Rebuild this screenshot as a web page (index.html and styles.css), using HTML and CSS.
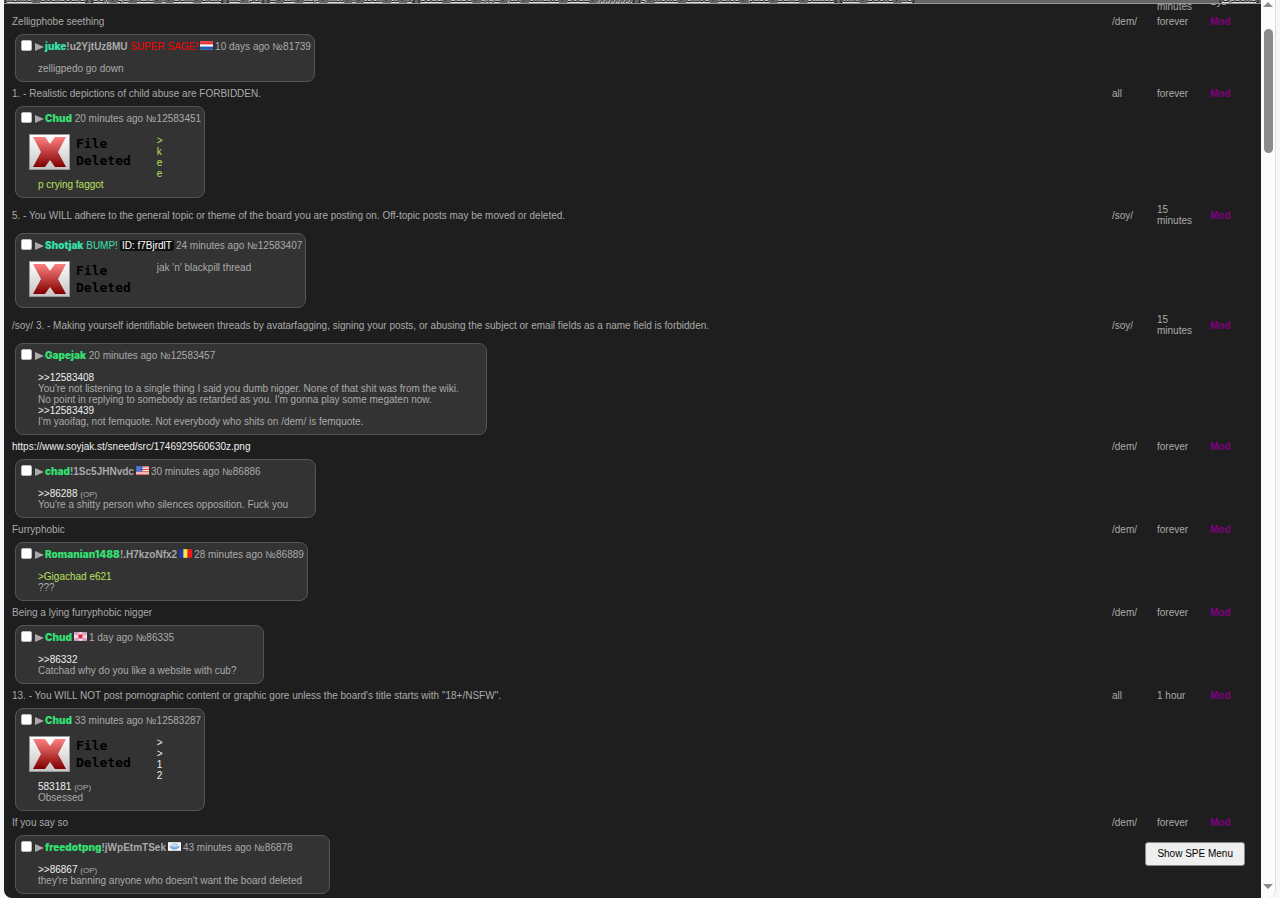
FILE: index.html
```html
<!DOCTYPE html>
<html lang="en">
<head>
    <meta charset="UTF-8">
    <meta name="viewport" content="width=device-width, initial-scale=1.0">
    <title>Ban list</title>
    <link rel="stylesheet" href="styles.css">
</head>
<body>
    <svg class="defs" aria-hidden="true">
        <defs>
            <linearGradient id="paper" x1="0" y1="0" x2="0" y2="1">
                <stop offset="0" stop-color="#ffffff"/>
                <stop offset="1" stop-color="#c4c4c4"/>
            </linearGradient>
            <linearGradient id="cross" x1="0" y1="0" x2="0" y2="1">
                <stop offset="0" stop-color="#ff8080"/>
                <stop offset="1" stop-color="#800000"/>
            </linearGradient>
            <symbol id="deleted" viewBox="0 0 41 36">
                <rect x="0.5" y="0.5" width="40" height="35" fill="url(#paper)" stroke="#999"/>
                <path d="M4 3H16L21 10L26 3H37L29 18L37 33H26L21 26L16 33H4L12 18Z" fill="url(#cross)"/>
            </symbol>
        </defs>
    </svg>

    <main class="page">
        <nav class="boardlist">
            <span>[<a href="#">home</a> / <a href="#">overboard</a>] [<a href="#">soy</a> / <a href="#">qa</a> / <a href="#">raid</a> / <a href="#">r</a> / <a href="#">dem</a> / <a href="#">craft</a>] [<a href="#">int</a> / <a href="#">pol</a>] [<a href="#">a</a> / <a href="#">an</a> / <a href="#">asp</a> / <a href="#">mtv</a> / <a href="#">r</a> / <a href="#">tech</a> / <a href="#">tv</a> / <a href="#">x</a>] [<a href="#">soda</a> / <a href="#">base</a> / <a href="#">giga</a> / <a href="#">jak</a> / <a href="#">omake</a> / <a href="#">soda</a> / <a href="#">yyyyyyy</a>] [<a href="#">q</a> / <a href="#">news</a> / <a href="#">chive</a> / <a href="#">rules</a> / <a href="#">pass</a> / <a href="#">bans</a> / <a href="#">status</a>] [<a href="#">wiki</a> / <a href="#">booru</a> / <a href="#">irc</a>]</span>
            <span>[<a href="#">Options</a>]</span>
        </nav>

        <table class="bans">
            <colgroup>
                <col>
                <col class="col-board">
                <col class="col-length">
                <col class="col-staff">
            </colgroup>
            <tbody>
                <tr>
                    <td></td>
                    <td></td>
                    <td class="length">15 minutes</td>
                    <td>Sys</td>
                </tr>

                <tr>
                    <td>Zelligphobe seething</td>
                    <td>/dem/</td>
                    <td class="length">forever</td>
                    <td class="mod">Mod</td>
                </tr>
                <tr>
                    <td colspan="4">
                        <div class="post">
                            <div class="intro">
                                <input type="checkbox" aria-label="Select post 81739"><span class="arrow"></span>
                                <span><b class="name email">juke</b><b class="trip">!u2YjtUz8MU</b> <span class="sage">SUPER SAGE!</span></span>
                                <svg class="flag" viewBox="0 0 12 8"><rect width="12" height="8" fill="#fff"/><rect width="12" height="3" fill="#e8383c"/><rect y="5" width="12" height="3" fill="#2458a8"/></svg>
                                <span>10 days ago №81739</span>
                            </div>
                            <div class="body">zelligpedo go down</div>
                        </div>
                    </td>
                </tr>

                <tr>
                    <td>1. - Realistic depictions of child abuse are FORBIDDEN.</td>
                    <td>all</td>
                    <td class="length">forever</td>
                    <td class="mod">Mod</td>
                </tr>
                <tr>
                    <td colspan="4">
                        <div class="post">
                            <div class="intro">
                                <input type="checkbox" aria-label="Select post 12583451"><span class="arrow"></span>
                                <span><b class="name">Chud</b> 20 minutes ago №12583451</span>
                            </div>
                            <div class="file"><svg class="file-icon"><use href="#deleted"/></svg><span>File<br>Deleted</span></div>
                            <div class="body"><span class="quote">&gt;keep crying faggot</span></div>
                        </div>
                    </td>
                </tr>

                <tr>
                    <td>5. - You WILL adhere to the general topic or theme of the board you are posting on. Off-topic posts may be moved or deleted.</td>
                    <td>/soy/</td>
                    <td class="length">15 minutes</td>
                    <td class="mod">Mod</td>
                </tr>
                <tr>
                    <td colspan="4">
                        <div class="post">
                            <div class="intro">
                                <input type="checkbox" aria-label="Select post 12583407"><span class="arrow"></span>
                                <span><b class="name email">Shotjak</b> <span class="bump">BUMP!</span></span>
                                <span class="poster-id">ID: f7BjrdlT</span>
                                <span>24 minutes ago №12583407</span>
                            </div>
                            <div class="file"><svg class="file-icon"><use href="#deleted"/></svg><span>File<br>Deleted</span></div>
                            <div class="body">jak 'n' blackpill thread</div>
                        </div>
                    </td>
                </tr>

                <tr>
                    <td>/soy/ 3. - Making yourself identifiable between threads by avatarfagging, signing your posts, or abusing the subject or email fields as a name field is forbidden.</td>
                    <td>/soy/</td>
                    <td class="length">15 minutes</td>
                    <td class="mod">Mod</td>
                </tr>
                <tr>
                    <td colspan="4">
                        <div class="post">
                            <div class="intro">
                                <input type="checkbox" aria-label="Select post 12583457"><span class="arrow"></span>
                                <span><b class="name">Gapejak</b> 20 minutes ago №12583457</span>
                            </div>
                            <div class="body"><a href="#">&gt;&gt;12583408</a><br>You're not listening to a single thing I said you dumb nigger. None of that shit was from the wiki.<br>No point in replying to somebody as retarded as you. I'm gonna play some megaten now.<br><a href="#">&gt;&gt;12583439</a><br>I'm yaoifag, not femquote. Not everybody who shits on /dem/ is femquote.</div>
                        </div>
                    </td>
                </tr>

                <tr>
                    <td><a href="#">https://www.soyjak.st/sneed/src/1746929560630z.png</a></td>
                    <td>/dem/</td>
                    <td class="length">forever</td>
                    <td class="mod">Mod</td>
                </tr>
                <tr>
                    <td colspan="4">
                        <div class="post">
                            <div class="intro">
                                <input type="checkbox" aria-label="Select post 86886"><span class="arrow"></span>
                                <span><b class="name">chad</b><b class="trip">!1Sc5JHNvdc</b></span>
                                <svg class="flag" viewBox="0 0 12 8"><rect width="12" height="8" fill="#f4d8d8"/><path d="M0 0.5H12M0 3H12M0 5.2H12M0 7.5H12" stroke="#e85050"/><rect width="6" height="5" fill="#3868c8"/><path d="M1 1.5H5M1 3.5H5" stroke="#a8c0f0" stroke-width="0.7" stroke-dasharray="1 1"/></svg>
                                <span>30 minutes ago №86886</span>
                            </div>
                            <div class="body"><a href="#">&gt;&gt;86288</a> <small>(OP)</small><br>You're a shitty person who silences opposition. Fuck you</div>
                        </div>
                    </td>
                </tr>

                <tr>
                    <td>Furryphobic</td>
                    <td>/dem/</td>
                    <td class="length">forever</td>
                    <td class="mod">Mod</td>
                </tr>
                <tr>
                    <td colspan="4">
                        <div class="post">
                            <div class="intro">
                                <input type="checkbox" aria-label="Select post 86889"><span class="arrow"></span>
                                <span><b class="name">Romanian1488</b><b class="trip">!.H7kzoNfx2</b></span>
                                <svg class="flag" viewBox="0 0 12 8"><rect width="4" height="8" fill="#1838c0"/><rect x="4" width="4" height="8" fill="#fce83c"/><rect x="8" width="4" height="8" fill="#f01818"/></svg>
                                <span>28 minutes ago №86889</span>
                            </div>
                            <div class="body"><span class="quote">&gt;Gigachad e621</span><br>???</div>
                        </div>
                    </td>
                </tr>

                <tr>
                    <td>Being a lying furryphobic nigger</td>
                    <td>/dem/</td>
                    <td class="length">forever</td>
                    <td class="mod">Mod</td>
                </tr>
                <tr>
                    <td colspan="4">
                        <div class="post">
                            <div class="intro">
                                <input type="checkbox" aria-label="Select post 86335"><span class="arrow"></span>
                                <b class="name">Chud</b>
                                <svg class="flag" viewBox="0 0 12 8"><rect width="12" height="8" fill="#f2b4c8"/><path d="M0 0L12 8M12 0L0 8" stroke="#a890d8"/><path d="M6 0V8M0 4H12" stroke="#fbe4ea" stroke-width="2"/><circle cx="6" cy="4" r="2" fill="#e02838"/></svg>
                                <span>1 day ago №86335</span>
                            </div>
                            <div class="body"><a href="#">&gt;&gt;86332</a><br>Catchad why do you like a website with cub?</div>
                        </div>
                    </td>
                </tr>

                <tr>
                    <td>13. - You WILL NOT post pornographic content or graphic gore unless the board's title starts with "18+/NSFW".</td>
                    <td>all</td>
                    <td class="length">1 hour</td>
                    <td class="mod">Mod</td>
                </tr>
                <tr>
                    <td colspan="4">
                        <div class="post">
                            <div class="intro">
                                <input type="checkbox" aria-label="Select post 12583287"><span class="arrow"></span>
                                <span><b class="name">Chud</b> 33 minutes ago №12583287</span>
                            </div>
                            <div class="file"><svg class="file-icon"><use href="#deleted"/></svg><span>File<br>Deleted</span></div>
                            <div class="body"><a href="#">&gt;&gt;12583181</a> <small>(OP)</small><br>Obsessed</div>
                        </div>
                    </td>
                </tr>

                <tr>
                    <td>If you say so</td>
                    <td>/dem/</td>
                    <td class="length">forever</td>
                    <td class="mod">Mod</td>
                </tr>
                <tr>
                    <td colspan="4">
                        <div class="post">
                            <div class="intro">
                                <input type="checkbox" aria-label="Select post 86878"><span class="arrow"></span>
                                <span><b class="name">freedotpng</b><b class="trip">!jWpEtmTSek</b></span>
                                <svg class="flag" viewBox="0 0 12 8"><rect width="12" height="8" fill="#f4f8fc"/><path d="M1 3Q2 6.5 6 7Q10 6.5 11 3L8 4.5H4Z" fill="#78a8d8"/><ellipse cx="6" cy="3" rx="3" ry="1.6" fill="#c4dcf0" stroke="#88b0dc" stroke-width="0.6"/></svg>
                                <span>43 minutes ago №86878</span>
                            </div>
                            <div class="body"><a href="#">&gt;&gt;86867</a> <small>(OP)</small><br>they're banning anyone who doesn't want the board deleted</div>
                        </div>
                    </td>
                </tr>
            </tbody>
        </table>

        <button type="button" class="spe-menu">Show SPE Menu</button>
    </main>

    <div class="scrollbar">
        <span class="scroll-up"></span>
        <span class="thumb"></span>
        <span class="scroll-down"></span>
    </div>
</body>
</html>
```
FILE: styles.css
```css
* {
    box-sizing: border-box;
}
body {
    display: flex;
    height: 100vh;
    margin: 0;
    padding: 0 4px;
    overflow: hidden;
    background: #f6f7f9;
    color: #aaa;
    font-family: "Liberation Sans", Arial, sans-serif;
    font-size: 10px;
    line-height: 11px;
}
a {
    color: #eee;
    text-decoration: none;
}
.defs {
    position: absolute;
    width: 0;
    height: 0;
}

/* window */
.page {
    position: relative;
    flex: 1;
    overflow: hidden;
    padding: 0 4px 0 5px;
    background: #1e1e1e;
    border-bottom-left-radius: 8px;
}
.boardlist {
    position: absolute;
    top: 0;
    left: 0;
    right: 0;
    display: flex;
    justify-content: space-between;
    align-items: flex-end;
    height: 4px;
    padding: 0 2px 0 0;
    overflow: hidden;
    background: #666;
    border-bottom: 1px solid #999;
    color: #111;
    white-space: nowrap;
}
.boardlist a {
    color: #ddd;
    text-decoration: underline;
    text-shadow: 0 1px #000;
}

/* ban table */
.bans {
    width: 100%;
    margin-top: -13px;
    border-spacing: 2px;
    table-layout: fixed;
}
.bans td {
    padding: 1px;
}
.bans .length {
    padding-right: 10px;
}
.col-board {
    width: 43px;
}
.col-length {
    width: 51px;
}
.col-staff {
    width: 46px;
}
.mod {
    color: #800080;
    font-weight: bold;
}

/* posts */
.post {
    display: flow-root;
    width: fit-content;
    margin: 3px 3px 2px;
    padding: 3px;
    background: #333;
    border: 1px solid #555;
    border-radius: 8px;
}
.intro {
    display: flex;
    align-items: center;
    gap: 2px;
    height: 17px;
    padding-left: 2px;
    white-space: nowrap;
}
.intro input {
    appearance: none;
    width: 11px;
    height: 11px;
    margin: 0 1px 3px 0;
    background: #fff;
    border: 1px solid #bbb;
    border-radius: 2px;
}
.intro input:checked {
    background: #0075ff;
}
.arrow {
    border: 4px solid transparent;
    border-left: 9px solid #aaa;
    border-right: 0;
    margin-right: -1px;
}
.name {
    color: #34e073;
    font-family: Inter, "Liberation Sans", sans-serif;
    font-weight: 900;
}
.email,
.bump {
    color: #34e0a8;
}
.sage {
    color: #f00;
}
.poster-id {
    padding: 0 2px;
    background: #111;
    border-radius: 2px;
    color: #fff;
}
.flag {
    width: 13px;
    height: 9px;
    margin-bottom: 2px;
}
.body {
    margin: 8px 24px 4px 19px;
    word-break: break-all;
}
.body small {
    font-size: 8px;
    line-height: 8px;
}
.quote {
    color: #b8e05c;
}
.file {
    float: left;
    display: flex;
    align-items: center;
    gap: 6px;
    height: 36px;
    margin: 7px 26px 7px 10px;
    color: #000;
    font: bold 13px/17px "DejaVu Sans Mono", monospace;
}
.file + .body {
    margin-right: 34px;
}
.file-icon {
    width: 41px;
    height: 36px;
}

.spe-menu {
    position: absolute;
    right: 16px;
    bottom: 32px;
    padding: 4px 11px;
    background: #efefef;
    border: 1px solid #888;
    border-radius: 3px;
    color: #000;
    font: 10px/14px "Liberation Sans", Arial, sans-serif;
}

/* scrollbar */
.scrollbar {
    display: flex;
    flex-direction: column;
    align-items: center;
    width: 15px;
    padding: 2px 0 9px;
    background: #fcfcfc;
    border-right: 1px solid #ddd;
    border-bottom-right-radius: 8px;
}
.scroll-up,
.scroll-down {
    border: 5px solid transparent;
}
.scroll-up {
    border-top: 0;
    border-bottom-color: #8b8b8b;
}
.scroll-down {
    margin-top: auto;
    border-bottom: 0;
    border-top-color: #8b8b8b;
}
.thumb {
    width: 9px;
    height: 14%;
    margin-top: 22px;
    background: #8b8b8b;
    border-radius: 5px;
}
```
